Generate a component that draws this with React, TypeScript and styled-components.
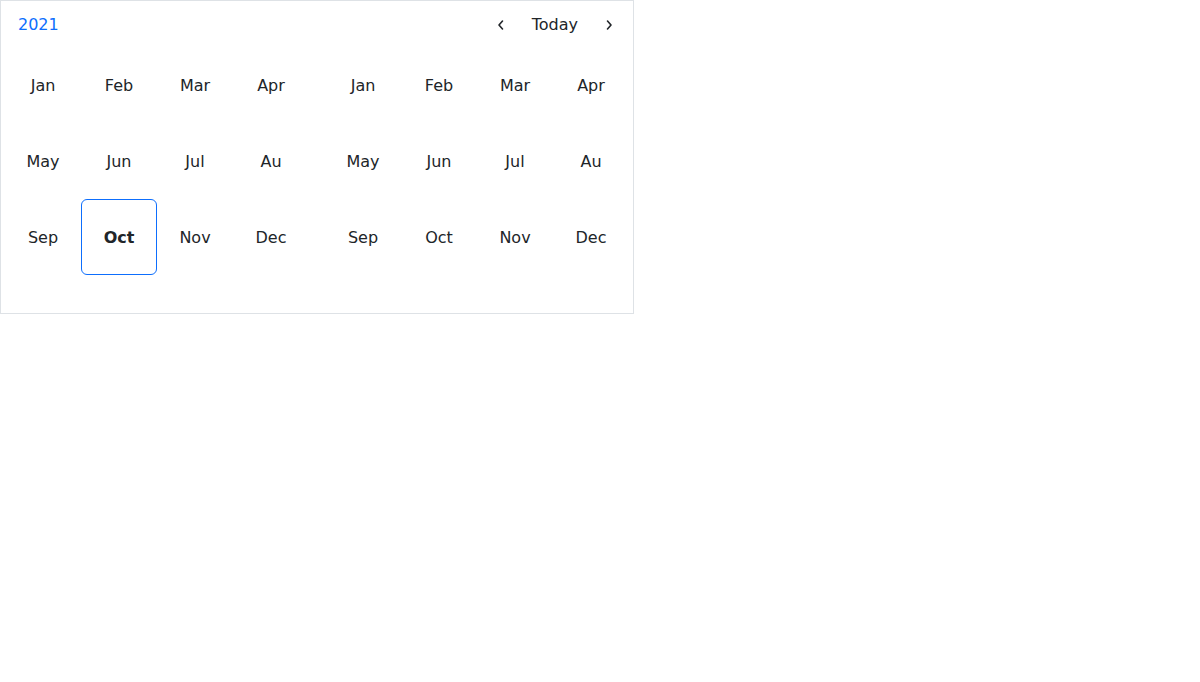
import React from "react";
import styled, { createGlobalStyle } from "styled-components";

const Global = createGlobalStyle`
  body { margin: 0; font-family: "DejaVu Sans", sans-serif; color: #212529; background: #fff; }
`;

const Panel = styled.div`
  width: 634px;
  height: 314px;
  box-sizing: border-box;
  border: 1px solid #dee2e6;
  display: flex;
  flex-direction: column;
`;

const Header = styled.div`
  height: 46px;
  box-sizing: border-box;
  padding: 1px 14px 0 17px;
  display: flex;
  align-items: center;
  font-size: 16px;
`;

const Year = styled.button`
  border: 0;
  background: none;
  padding: 0;
  font: inherit;
  color: #0d6efd;
  cursor: pointer;
  margin-right: auto;
  line-height: 1;
`;

const NavButton = styled.button`
  border: 0;
  background: none;
  padding: 0;
  width: 20px;
  height: 24px;
  display: flex;
  align-items: center;
  justify-content: center;
  color: #212529;
  cursor: pointer;
`;

const TodayButton = styled.button`
  border: 0;
  background: none;
  font: inherit;
  color: #212529;
  padding: 0 21px;
  line-height: 1;
  cursor: pointer;
`;

const Body = styled.div`
  display: flex;
  gap: 16px;
  padding: 0 4px;
`;

const Grid = styled.div`
  display: grid;
  grid-template-columns: repeat(4, 76px);
  grid-auto-rows: 76px;
`;

const Cell = styled.div<{ $active?: boolean }>`
  box-sizing: border-box;
  display: flex;
  align-items: center;
  justify-content: center;
  font-size: 16px;
  border-radius: 6px;
  border: 1px solid ${(p) => (p.$active ? "#0d6efd" : "transparent")};
  font-weight: ${(p) => (p.$active ? 700 : 400)};
  color: #212529;
`;

const months = ["Jan", "Feb", "Mar", "Apr", "May", "Jun", "Jul", "Au", "Sep", "Oct", "Nov", "Dec"];

const Chevron = ({ dir }: { dir: "left" | "right" }) => (
  <svg width="8" height="12" viewBox="0 0 8 12" fill="none">
    <path
      d={dir === "left" ? "M5.5 2 L2 6 L5.5 10" : "M2.5 2 L6 6 L2.5 10"}
      stroke="#212529"
      strokeWidth="1.6"
      strokeLinecap="round"
      strokeLinejoin="round"
    />
  </svg>
);

export default function App() {
  return (
    <>
      <Global />
      <Panel>
        <Header>
          <Year>2021</Year>
          <NavButton aria-label="Previous">
            <Chevron dir="left" />
          </NavButton>
          <TodayButton>Today</TodayButton>
          <NavButton aria-label="Next">
            <Chevron dir="right" />
          </NavButton>
        </Header>
        <Body>
          <Grid>
            {months.map((m) => (
              <Cell key={m} $active={m === "Oct"}>
                {m}
              </Cell>
            ))}
          </Grid>
          <Grid>
            {months.map((m) => (
              <Cell key={m}>{m}</Cell>
            ))}
          </Grid>
        </Body>
      </Panel>
    </>
  );
}
